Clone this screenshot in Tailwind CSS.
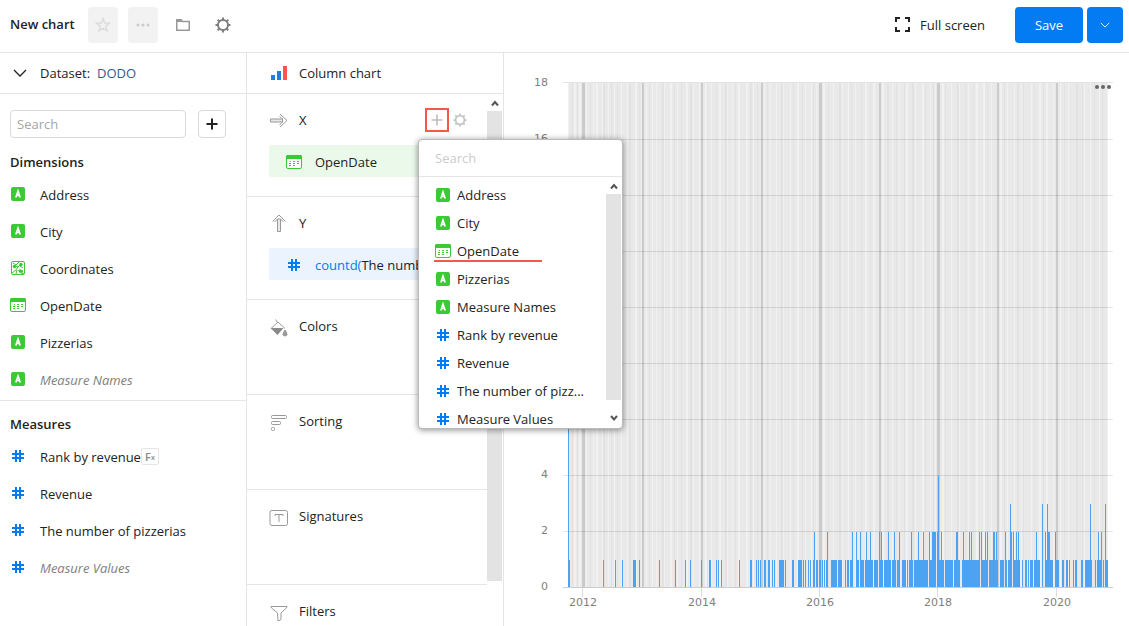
<!DOCTYPE html>
<html lang="en">
<head>
<meta charset="utf-8">
<title>New chart</title>
<script src="https://cdn.jsdelivr.net/npm/@tailwindcss/browser@4"></script>
</head>
<body class="h-screen overflow-hidden bg-white font-['Open_Sans',sans-serif] text-[13px] leading-5 text-[#222]">
<svg class="hidden" aria-hidden="true">
  <symbol id="string" viewBox="0 0 16 14"><rect x="1" width="14" height="14" rx="2" fill="#3bc935"/><path d="M5.800 10.500 8 4l2.200 6.500M6.500 8.500h3" fill="none" stroke="#fff" stroke-width="1.600"/></symbol>
  <symbol id="date" viewBox="0 0 16 14"><rect x=".5" y=".5" width="15" height="13" rx="1.500" fill="#fff" stroke="#3bc935"/><path d="M0 4V1.500Q0 0 1.500 0h13Q16 0 16 1.500V4z" fill="#3bc935"/><path d="M7 6.500h2M11 6.500h2M3 8.500h2M7 8.500h2M11 8.500h2M3 10.500h2M7 10.500h2M4 6.500h1" stroke="#3bc935"/></symbol>
  <symbol id="geo" viewBox="0 0 16 14"><rect x="1.500" y=".5" width="13" height="13" rx="1.500" fill="#fff" stroke="#3bc935"/><path d="M3 2l3 2 3-3M5 5l3 1-2 3-4 3M7 9l-1 4M8 6l3-3M13 7l-3-2M11 12l3 1" fill="none" stroke="#3bc935"/><circle cx="4.500" cy="5.500" r="1.800" fill="#3bc935"/><circle cx="11" cy="3.500" r="1.700" fill="#3bc935"/><path d="M8 9.500q2-2 3-1l2 1v2l-3 .5z" fill="#3bc935"/></symbol>
  <symbol id="number" viewBox="0 0 16 14"><path d="M6 1v12M10 1v12M2 5h12M2 9h12" stroke="#027bf3" stroke-width="2"/></symbol>
  <symbol id="gear" viewBox="0 0 16 16"><g fill="none" stroke="currentColor" stroke-width="2"><circle cx="8" cy="8" r="5"/><path d="M8 3V.5M8 13v2.500M3 8H.5M13 8h2.500M4.500 4.500 2.700 2.700M11.500 11.500l1.800 1.800M4.500 11.500l-1.800 1.800M11.500 4.500l1.800-1.800"/></g></symbol>
  <symbol id="down" viewBox="0 0 14 8"><path d="M1 1l6 6 6-6" fill="none" stroke="currentColor" stroke-width="1.300"/></symbol>
</svg>

<div class="flex h-full flex-col">
<header class="flex h-[53px] shrink-0 items-center border-b border-[#e5e5e5] pr-1.5 pb-[3px] pl-2.5">
  <h1 class="w-[78px] pb-px font-semibold">New chart</h1>
  <button class="flex h-9 w-[30px] items-center justify-center rounded bg-[#f2f2f2]" aria-label="Favorite"><svg class="size-4" viewBox="0 0 16 16"><path d="M8 1.500 9.700 6.100l4.800.1-3.800 3 1.400 4.700L8 11.100l-4.100 2.800 1.400-4.700-3.800-3 4.800-.1z" fill="none" stroke="#dcdcdc" stroke-width="1.400"/></svg></button>
  <button class="ml-2.5 flex h-9 w-[30px] items-center justify-center rounded bg-[#f2f2f2]" aria-label="More"><svg class="h-1 w-3.5" viewBox="0 0 14 4" fill="#ccc"><circle cx="2" cy="2" r="1.500"/><circle cx="7" cy="2" r="1.500"/><circle cx="12" cy="2" r="1.500"/></svg></button>
  <button class="ml-2.5 flex h-9 w-[30px] items-center justify-center text-[#999]" aria-label="Folder"><svg class="h-3 w-3.5" viewBox="0 0 14 12"><path d="M.75 11.200V1h4.500l1 1.500h7v8.700z" fill="none" stroke="currentColor" stroke-width="1.500"/><path d="M0 0h5l2 3H0z" fill="currentColor"/></svg></button>
  <button class="ml-2.5 flex h-9 w-[30px] items-center justify-center text-[#7f7f7f]" aria-label="Settings"><svg class="size-4"><use href="#gear"/></svg></button>
  <button class="ml-auto flex items-center gap-2.5"><svg class="size-[15px]" viewBox="0 0 15 15"><path d="M1 5V1h4M10 1h4v4M14 10v4h-4M5 14H1v-4" fill="none" stroke="#222" stroke-width="2"/></svg>Full screen</button>
  <button class="ml-[30px] h-9 w-[68px] rounded bg-[#027bf3] text-white">Save</button>
  <button class="ml-1 flex h-9 w-9 items-center justify-center rounded bg-[#027bf3] text-white" aria-label="Save options"><svg class="h-1.5 w-2.5"><use href="#down"/></svg></button>
</header>

<div class="flex min-h-0 flex-1">
<aside class="w-[247px] shrink-0 border-r border-[#e5e5e5]">
  <div class="flex h-[41px] items-center border-b border-[#e5e5e5] pl-[13px]"><svg class="mr-[13px] h-2 w-3.5"><use href="#down"/></svg>Dataset:<a href="#" class="ml-[7px] text-[#315b91]">DODO</a></div>
  <div class="flex gap-3 px-2.5 pt-4">
    <input aria-label="Search fields" placeholder="Search" class="h-7 w-44 rounded border border-[#d9d9d9] px-1.5 outline-none placeholder:text-[#a5a5a5]">
    <button class="flex size-7 items-center justify-center rounded border border-[#d9d9d9]" aria-label="Add field"><svg class="size-3" viewBox="0 0 12 12"><path d="M6 .5v11M.5 6h11" stroke="#222" stroke-width="2"/></svg></button>
  </div>
  <section class="border-b border-[#e5e5e5] pt-3.5 pb-0.5 pl-2.5">
    <h2 class="font-semibold">Dimensions</h2>
    <ul class="pt-1">
      <li class="flex h-[37px] items-center"><svg class="mr-3.5 mb-0.5 h-3.5 w-4"><use href="#string"/></svg>Address</li>
      <li class="flex h-[37px] items-center"><svg class="mr-3.5 mb-0.5 h-3.5 w-4"><use href="#string"/></svg>City</li>
      <li class="flex h-[37px] items-center"><svg class="mr-3.5 mb-0.5 h-3.5 w-4"><use href="#geo"/></svg>Coordinates</li>
      <li class="flex h-[37px] items-center"><svg class="mr-3.5 mb-0.5 h-3.5 w-4"><use href="#date"/></svg>OpenDate</li>
      <li class="flex h-[37px] items-center"><svg class="mr-3.5 mb-0.5 h-3.5 w-4"><use href="#string"/></svg>Pizzerias</li>
      <li class="flex h-[37px] items-center text-[#808080] italic"><svg class="mr-3.5 mb-0.5 h-3.5 w-4"><use href="#string"/></svg>Measure Names</li>
    </ul>
  </section>
  <section class="pt-[13px] pl-2.5">
    <h2 class="font-semibold">Measures</h2>
    <ul class="pt-1">
      <li class="flex h-[37px] items-center"><svg class="mr-3.5 mb-0.5 h-3.5 w-4"><use href="#number"/></svg>Rank by revenue<span class="flex h-[17px] w-[18px] items-center justify-center rounded-xs border border-[#e5e5e5] text-[11px] font-semibold text-[#888]">F<sub class="text-[7px]">x</sub></span></li>
      <li class="flex h-[37px] items-center"><svg class="mr-3.5 mb-0.5 h-3.5 w-4"><use href="#number"/></svg>Revenue</li>
      <li class="flex h-[37px] items-center"><svg class="mr-3.5 mb-0.5 h-3.5 w-4"><use href="#number"/></svg>The number of pizzerias</li>
      <li class="flex h-[37px] items-center text-[#808080] italic"><svg class="mr-3.5 mb-0.5 h-3.5 w-4"><use href="#number"/></svg>Measure Values</li>
    </ul>
  </section>
</aside>

<section class="flex w-[257px] shrink-0 flex-col border-r border-[#e5e5e5]">
  <button class="flex h-[41px] shrink-0 items-center border-b border-[#e5e5e5] pl-6"><svg class="mr-3 h-4 w-4" viewBox="0 0 16 16"><path d="M0 10h4v5H0z" fill="#1e7fe0"/><path d="M6 6h4v9H6z" fill="#1e7fe0"/><path d="M12 1h4v14h-4z" fill="#ff5252"/></svg>Column chart</button>
  <div class="flex min-h-0 flex-1">
    <div class="min-w-0 flex-1">
      <section class="relative h-[103px] border-b border-[#e5e5e5] pt-4 pl-[22px]">
        <div class="flex h-5 items-center"><svg class="mr-[11px] h-[15px] w-[19px]" viewBox="0 0 19 15"><path d="M1.500 6h12v3h-12z" fill="#e8e8e8" stroke="#999"/><path d="M11 1 18 7.500 11 14M13.500 6l-3-3M13.500 9l-3 3" fill="none" stroke="#999"/></svg><h3>X</h3>
          <button class="ml-auto flex h-6 w-6 items-center justify-center border-2 border-[#f4584a]" aria-label="Add field to X"><svg class="size-3" viewBox="0 0 12 12"><path d="M6 .5v11M.5 6h11" stroke="#bdbdbd" stroke-width="1.600"/></svg></button>
          <button class="mr-5 ml-1 text-[#c4c4c4]" aria-label="X settings"><svg class="size-3.5"><use href="#gear"/></svg></button>
        </div>
        <button class="mt-[15px] flex h-8 w-[196px] items-center rounded-xs bg-[#ebf9eb] pt-px pl-[17px]"><svg class="mr-[13px] h-3.5 w-4"><use href="#date"/></svg>OpenDate</button>

        <div class="absolute top-[45px] left-[171px] z-10 h-[290px] w-[205px] overflow-hidden rounded-sm border border-[#bbb] bg-white shadow-[0_1px_6px_rgba(0,0,0,0.45)]">
          <input aria-label="Search fields for X" placeholder="Search" class="block h-[37px] w-full border-b border-[#e5e5e5] px-4 outline-none placeholder:text-[#ccc]">
          <div class="flex h-[251px]">
            <ul class="min-w-0 flex-1 pt-1 pl-4">
              <li><button class="flex h-7 items-center"><svg class="mr-1.5 h-3.5 w-4"><use href="#string"/></svg>Address</button></li>
              <li><button class="flex h-7 items-center"><svg class="mr-1.5 h-3.5 w-4"><use href="#string"/></svg>City</button></li>
              <li class="relative"><button class="flex h-7 items-center"><svg class="mr-1.5 h-3.5 w-4"><use href="#date"/></svg>OpenDate</button><span class="absolute bottom-[3px] -left-px h-0.5 w-[108px] bg-[#f4584a]"></span></li>
              <li><button class="flex h-7 items-center"><svg class="mr-1.5 h-3.5 w-4"><use href="#string"/></svg>Pizzerias</button></li>
              <li><button class="flex h-7 items-center"><svg class="mr-1.5 h-3.5 w-4"><use href="#string"/></svg>Measure Names</button></li>
              <li><button class="flex h-7 items-center"><svg class="mr-1.5 h-3.5 w-4"><use href="#number"/></svg>Rank by revenue</button></li>
              <li><button class="flex h-7 items-center"><svg class="mr-1.5 h-3.5 w-4"><use href="#number"/></svg>Revenue</button></li>
              <li><button class="flex h-7 items-center"><svg class="mr-1.5 h-3.5 w-4"><use href="#number"/></svg>The number of pizz...</button></li>
              <li><button class="flex h-7 items-center"><svg class="mr-1.5 h-3.5 w-4"><use href="#number"/></svg>Measure Values</button></li>
            </ul>
            <div class="mr-px flex w-[15px] flex-col items-center text-[#555]">
              <svg class="h-[17px] w-2" viewBox="0 0 8 17"><path d="M1 11.500l3-3.500 3 3.500" fill="none" stroke="currentColor" stroke-width="2"/></svg>
              <div class="w-full flex-1 bg-[#e3e3e3]"></div>
              <svg class="h-7 w-2" viewBox="0 0 8 28"><path d="M1 16l3 3.500L7 16" fill="none" stroke="currentColor" stroke-width="2"/></svg>
            </div>
          </div>
        </div>
      </section>
      <section class="h-[103px] border-b border-[#e5e5e5] pt-4 pl-[22px]">
        <div class="flex h-5 items-center"><svg class="mr-[11px] h-[18px] w-[19px]" viewBox="0 0 19 18"><path d="M8.500 5h3v12.500h-3z" fill="#e8e8e8" stroke="#999"/><path d="M3.500 7.500 10 1l6.500 6.500M8.500 5l-3 3M11.500 5l3 3" fill="none" stroke="#999"/></svg><h3>Y</h3></div>
        <button class="mt-[15px] flex h-8 w-[196px] items-center overflow-hidden rounded-xs bg-[#ebf3ff] pt-px pl-[17px] whitespace-nowrap"><svg class="mr-[13px] h-3.5 w-4 shrink-0"><use href="#number"/></svg><span class="text-[#027bf3]">countd(</span>The number</button>
      </section>
      <section class="flex h-[95px] border-b border-[#e5e5e5] pt-4 pl-[22px]"><svg class="mt-[3px] mr-[11px] h-[18px] w-[19px]" viewBox="0 0 19 18"><path d="M2 9.500 9 3l7 6.500M9 4 6.500.5" fill="none" stroke="#999"/><path d="M1.500 9h13L8.500 16z" fill="#8a8a8a"/><path d="M16 11q4 5.500 0 6-4-.5 0-6z" fill="#999" stroke="#999"/></svg><h3>Colors</h3></section>
      <section class="flex h-[95px] border-b border-[#e5e5e5] pt-4 pl-[22px]"><svg class="mt-[3px] mr-[11px] h-[18px] w-[19px]" viewBox="0 0 19 18" fill="none" stroke="#999"><rect x="2.500" y="1.500" width="15" height="3" rx="1"/><rect x="2.500" y="7.500" width="9" height="3" rx="1"/><rect x="2.500" y="13.500" width="3" height="3" rx="1"/></svg><h3>Sorting</h3></section>
      <section class="flex h-[95px] border-b border-[#e5e5e5] pt-4 pl-[22px]"><svg class="mt-[3px] mr-[11px] h-[18px] w-[19px]" viewBox="0 0 19 18" fill="none" stroke="#999"><rect x="1" y="1.500" width="17.500" height="15" rx="2"/><path d="M6 7V5.500h8V7M10 5.500v7.500"/></svg><h3>Signatures</h3></section>
      <section class="flex pt-4 pl-[22px]"><svg class="mt-[3px] mr-[11px] h-[18px] w-[19px]" viewBox="0 0 19 18" fill="none" stroke="#999"><path d="M2 2.500h16l-.5 1.500-5.500 5v6.500L9 17l-.5-8L2.500 4z"/></svg><h3>Filters</h3></section>
    </div>
    <div class="mr-px flex w-[15px] flex-col items-center pb-[45px] text-[#555]">
      <svg class="h-[17px] w-2 shrink-0" viewBox="0 0 8 17"><path d="M1 11.500l3-3.500 3 3.500" fill="none" stroke="currentColor" stroke-width="2"/></svg>
      <div class="w-full flex-1 bg-[#e3e3e3]"></div>
    </div>
  </div>
</section>

<main class="min-w-0 flex-1">
  <svg id="chart" class="block h-auto w-full font-['DejaVu_Sans',sans-serif] text-[11px]" viewBox="504 53 625 573" role="img" aria-label="Number of pizzerias by opening date">
    <rect x="568" y="83" width="540" height="504" fill="#e9e9e9"/>
    <g id="bands"></g>
    <g id="grid"></g>
    <path d="M582.500 588v9M701.500 588v9M819.500 588v9M937.500 588v9M1056.500 588v9" stroke="#ddd"/>
    <g id="bars" fill="#4da2f1"></g>
    <g fill="#666"><circle cx="1097" cy="87" r="2"/><circle cx="1103" cy="87" r="2"/><circle cx="1109" cy="87" r="2"/></g>
    <g fill="#808080" text-anchor="middle"><text x="583" y="606">2012</text><text x="702" y="606">2014</text><text x="820" y="606">2016</text><text x="938" y="606">2018</text><text x="1057" y="606">2020</text></g>
    <g fill="#808080" text-anchor="end"><text x="548" y="86">18</text><text x="548" y="142">16</text><text x="548" y="478">4</text><text x="548" y="534">2</text><text x="548" y="590">0</text></g>
  </svg>
</main>
</div>
</div>
<script>
const add = (id, x, y, w, h, fill) => {
  const r = document.createElementNS('http://www.w3.org/2000/svg', 'rect');
  for (const [k, v] of Object.entries({x, y, width: w, height: h})) r.setAttribute(k, v);
  if (fill) r.setAttribute('fill', fill);
  document.getElementById(id).append(r);
};
// Vertical bands: colour, then x:width
const bands = {
  '#f1f1f1': '568 574:2 579:2 586 593 596:2 602 608 614 621 627 635:2 646 652 656 664 670:2 677 686:2 693 699 705:2 711 719:2 727 732 738:2 746:2 753 764 770 776 783 790 797:2 805 811 816 823:2 833 842 848 855 865:2 873:2 882:2 892 899 906:2 915 922:2 930 935 942:2 951 959 968 976:2 983:2 991 1000:2 1007 1014 1021 1031 1039:2 1046:2 1053 1060 1068 1076 1084 1090 1099 1107',
  '#e2e2e2': '572 577 590 603:2 611 617 629:2 639 649 662:2 674 681 690:2 707 716 725:2 735 750:2 757 767 781:2 793 802 813 828 839:2 851 861 870 887:2 896 904 912:2 925 933 945 957:2 965 973 987 1004 1017:2 1023 1034 1043 1064 1076:2 1082 1094 1102',
  '#cbcbcb': '582:3 642:2 701:2 761:2 819:3 879:2 937:3 997:2 1056:2'
};
for (const [c, s] of Object.entries(bands)) s.split(' ').forEach(p => { const [x, w = 1] = p.split(':'); add('bands', x, 83, w, 504, c); });
for (let i = 0; i < 10; i++) add('grid', 563, i === 9 ? 82 : 587 - i * 56, 550, 1, i ? '#0000001c' : '#ccc');
// Columns by value, x:width
const bars = {
  12: '568',
  1: '569 603 615 622 633:3 639 659 675 685 690 701 709:2 716 718 721 739 750:2 756 758 760 764:2 768:2 772 774 779:5 785 792:2 798:4 803 805 808 810 813:2 816:2 819:2 822 824 826:2 831:6 838:4 845 847:2 850:3 856:3 860:4 865:8 874:4 879:4 884:7 892:4 897:3 902:4 907 909:4 914:14 929:7 937:7 945:8 954:6 962:18 981:7 989:9 1000:4 1005:2 1008:4 1013:7 1022 1025:2 1028 1030:3 1034:6 1045:8 1055:4 1062:2 1066:2 1069 1073 1075:2 1081:2 1085:7 1095 1097:5 1103 1105:3',
  2: '814 827 852 856 860 866 870 879 881 888 894 899 911 918 923 929 932:4 937:2 941 956:2 963 969 971 979 981 985 987 993:2 996 1005 1010:2 1013 1016 1018 1036 1045 1047:3 1055 1098 1101',
  3: '1010 1042 1047 1090 1105',
  4: '938'
};
for (const [v, s] of Object.entries(bars)) s.split(' ').forEach(p => { const [x, w = 1] = p.split(':'); add('bars', x, 588 - v * 28, w, v * 28 - 1); });
</script>
</body>
</html>
